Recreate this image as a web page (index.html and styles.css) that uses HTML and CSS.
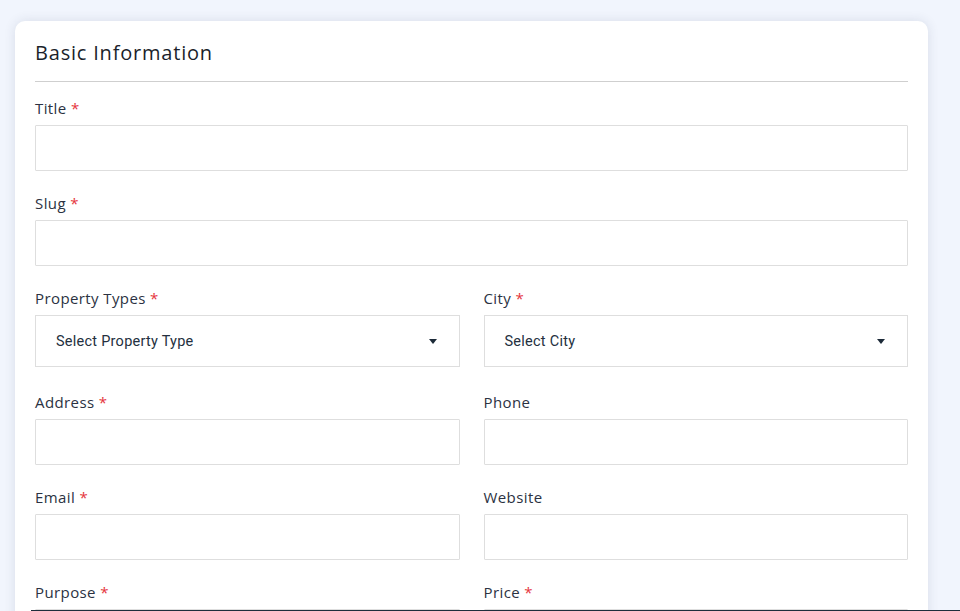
FILE: index.html
```html
<!DOCTYPE html>
<html lang="en">
<head>
<meta charset="utf-8">
<title>Basic Information</title>
<link rel="stylesheet" href="styles.css">
</head>
<body>
<div class="page">
  <section class="card">
    <h2 class="card-title">Basic Information</h2>
    <div class="field">
      <label class="label">Title <span class="req">*</span></label>
      <input class="input" type="text">
    </div>
    <div class="field">
      <label class="label">Slug <span class="req">*</span></label>
      <input class="input" type="text">
    </div>
    <div class="row">
      <div class="field field-select">
        <label class="label">Property Types <span class="req">*</span></label>
        <div class="select"><span>Select Property Type</span><span class="caret"></span></div>
      </div>
      <div class="field field-select">
        <label class="label">City <span class="req">*</span></label>
        <div class="select"><span>Select City</span><span class="caret"></span></div>
      </div>
    </div>
    <div class="row">
      <div class="field">
        <label class="label">Address <span class="req">*</span></label>
        <input class="input" type="text">
      </div>
      <div class="field">
        <label class="label">Phone</label>
        <input class="input" type="text">
      </div>
    </div>
    <div class="row">
      <div class="field">
        <label class="label">Email <span class="req">*</span></label>
        <input class="input" type="text">
      </div>
      <div class="field">
        <label class="label">Website</label>
        <input class="input" type="text">
      </div>
    </div>
    <div class="row">
      <div class="field">
        <label class="label">Purpose <span class="req">*</span></label>
        <input class="input" type="text">
      </div>
      <div class="field">
        <label class="label">Price <span class="req">*</span></label>
        <input class="input" type="text">
      </div>
    </div>
  </section>
</div>
<div class="bottom-edge"></div>
</body>
</html>
```

FILE: styles.css
```css
* { box-sizing: border-box; }
html, body { margin: 0; padding: 0; }
body {
  background: #f1f5fd;
  font-family: "Open Sans", "Liberation Sans", sans-serif;
  color: #1d2433;
  overflow: hidden;
  height: 611px;
}
.page {
  padding: 21px 32px 0 15px;
}
.card {
  background: #fff;
  border-radius: 10px;
  box-shadow: 0 0 12px rgba(40, 50, 80, 0.12);
  padding: 15px 20px 40px 20px;
}
.card-title {
  margin: 0;
  font-size: 20px;
  font-weight: 500;
  line-height: 34px;
  letter-spacing: 0.8px;
  color: #1b1f2b;
  padding-bottom: 11px;
  border-bottom: 1px solid #cfcfcf;
  margin-bottom: 15px;
}
.field { margin-bottom: 21px; }
.field-select { margin-bottom: 24px; }
.label {
  display: block;
  font-size: 15px;
  line-height: 23px;
  color: #2b3242;
  margin-bottom: 5px;
  letter-spacing: 0.4px;
}
.req { color: #e5343d; }
.input {
  display: block;
  width: 100%;
  height: 46px;
  border: 1px solid #dedede;
  border-radius: 1px;
  background: #fff;
  outline: none;
}
.row {
  display: grid;
  grid-template-columns: 1fr 1fr;
  column-gap: 24px;
}
.row .field { min-width: 0; }
.select {
  height: 52px;
  border: 1px solid #dedede;
  display: flex;
  align-items: center;
  justify-content: space-between;
  padding: 0 22px 0 20px;
  font-family: Roboto, "Liberation Sans", sans-serif;
  font-size: 14.5px;
  letter-spacing: 0.25px;
  color: #243040;
}
.caret {
  width: 0;
  height: 0;
  border-left: 4px solid transparent;
  border-right: 4px solid transparent;
  border-top: 5px solid #1c2a38;
}
.bottom-edge {
  position: fixed;
  left: 31px;
  right: 0;
  bottom: 0;
  height: 1px;
  background: #1e2d3b;
}
```
